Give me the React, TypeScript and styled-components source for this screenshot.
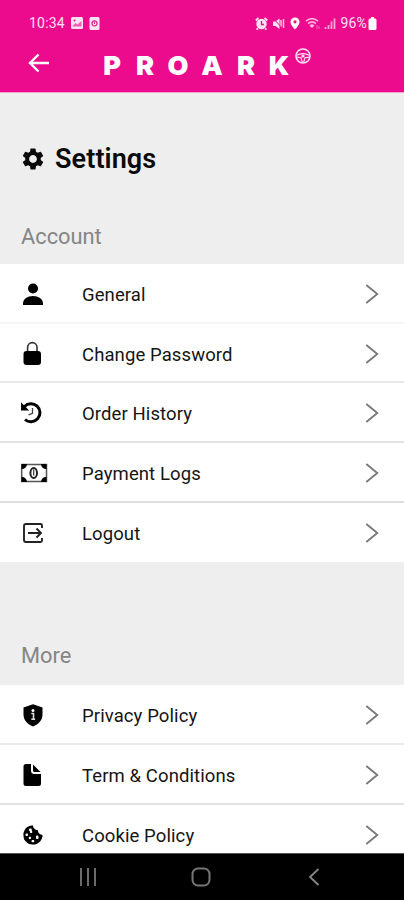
import React from "react";
import styled, { createGlobalStyle } from "styled-components";
import { FaCookieBite } from "react-icons/fa";
import { MdSettings } from "react-icons/md";

const GlobalStyle = createGlobalStyle`
  *, *::before, *::after { box-sizing: border-box; }
  body { margin: 0; background: #eeeeee; font-family: Roboto, "Liberation Sans", sans-serif; }
`;

const Screen = styled.div`
  width: 404px;
  height: 900px;
  display: flex;
  flex-direction: column;
  overflow: hidden;
  background: #eeeeee;
`;

const Header = styled.header`
  height: 93px;
  flex: none;
  background: #ec0b8d;
  border-bottom: 1px solid #f3a3d0;
  color: #ffe3f4;
`;

const StatusBar = styled.div`
  height: 46px;
  padding: 0 27px 0 29px;
  display: flex;
  align-items: center;
  justify-content: space-between;
  font-size: 14px;
`;

const StatusGroup = styled.div<{ $gap: number }>`
  display: flex;
  align-items: center;
  gap: ${(p) => p.$gap}px;
  svg { display: block; }
`;

const Clock = styled.span`
  width: 36px;
  letter-spacing: 0.2px;
  white-space: nowrap;
`;

const Battery = styled.span`
  display: flex;
  align-items: center;
  gap: 1px;
  letter-spacing: 0.2px;
`;

const TitleBar = styled.div`
  display: flex;
  height: 46px;
  padding-left: 28px;
`;

const BackButton = styled.button`
  width: 22px;
  height: 34px;
  padding: 0;
  border: 0;
  background: none;
  color: #fff;
  svg { display: block; }
`;

const Logo = styled.div`
  display: flex;
  margin-left: 45px;
  color: #fff;
  font-family: Inter, sans-serif;
  font-size: 26px;
  font-weight: 900;
  line-height: 40px;
`;

const Letter = styled.span<{ $w: number }>`
  width: ${(p) => p.$w}px;
  text-align: center;
  transform: scaleX(1.04);
`;

const Wheel = styled.svg`
  display: block;
  margin: 2px 0 0 0;
`;

const Content = styled.main`
  flex: 1;
  min-height: 0;
  overflow: hidden;
`;

const PageTitle = styled.h1`
  display: flex;
  align-items: center;
  gap: 9px;
  height: 131px;
  margin: 0;
  padding-left: 20px;
  font-size: 27px;
  font-weight: 600;
  letter-spacing: 0.1px;
  color: #0a0a0a;
`;

const Section = styled.section<{ $gap?: number }>`
  margin-top: ${(p) => p.$gap ?? 0}px;
`;

const SectionTitle = styled.h2<{ $h: number }>`
  margin: 0;
  height: ${(p) => p.$h}px;
  padding: 0 0 0 21px;
  font-size: 21.8px;
  line-height: 26px;
  font-weight: 400;
  color: #858585;
`;

const Row = styled.div<{ $h: number; $line: string }>`
  height: ${(p) => p.$h}px;
  display: flex;
  align-items: center;
  padding: 2px 25px 0 20px;
  background: #fff;
  border-bottom: 2px solid ${(p) => p.$line};
`;

const IconBox = styled.span`
  width: 62px;
  display: flex;
  svg { display: block; }
`;

const Label = styled.span`
  flex: 1;
  padding-top: 2px;
  font-size: 18.5px;
  letter-spacing: 0.1px;
  color: #151515;
`;

const NavBar = styled.nav`
  height: 47px;
  flex: none;
  display: flex;
  justify-content: space-between;
  align-items: center;
  padding: 0 84px 0 79px;
  background: #000;
  border-top: 1px solid #555;
`;

const HomeKey = styled.svg`
  margin-right: 3px;
`;

const PersonIcon = () => (
  <svg width="26" height="26" viewBox="0 0 26 26">
    <circle cx="13" cy="7.500" r="5" />
    <path d="M3 24v-1.500C3 18 7.500 15 13 15s10 3 10 7.500V24z" />
  </svg>
);
const LockIcon = () => (
  <svg width="26" height="26" viewBox="0 0 26 26">
    <path d="M7.600 11V6.300a4.700 4.700 0 0 1 9.400 0V11" fill="none" stroke="#333" strokeWidth="1.600" />
    <rect x="3.500" y="10" width="17.500" height="14" rx="3" />
  </svg>
);
const HistoryIcon = () => (
  <svg width="26" height="26" viewBox="0 0 26 26">
    <path d="M4.500 6.500A9 9 0 1 1 5 19.500" fill="none" stroke="#000" strokeWidth="3" />
    <path d="M1 2.200V10.500H9.200z" />
    <path d="M12.500 8v5.300l-4 1.500" fill="none" stroke="#444" strokeWidth="1.300" />
  </svg>
);
const MoneyIcon = () => (
  <svg width="28" height="26" viewBox="0 0 28 26">
    <rect x="1.700" y="4.500" width="24.800" height="17" fill="none" stroke="#555" strokeWidth="1.500" />
    <path d="M1.500 4h5.500a5 5 0 0 1-5.500 5zM26.500 4H21a5 5 0 0 0 5.500 5zM1.500 22h5.500a5 5 0 0 0-5.500-5zM26.500 22H21a5 5 0 0 1 5.500-5z" />
    <ellipse cx="13.700" cy="13" rx="3.300" ry="5" fill="none" stroke="#222" strokeWidth="2" />
    <path d="M13.700 9.500v6" stroke="#333" strokeWidth="1.200" />
  </svg>
);
const LogoutIcon = () => (
  <svg width="26" height="26" viewBox="0 0 26 26" fill="none" stroke="#222" strokeWidth="1.900">
    <path d="M22 8V5.500Q22 4 20.500 4H6Q4 4 4 6v14q0 2 2 2h14.500q1.500 0 1.500-1.500V18" />
    <path d="M8 13h12.500M16.500 8.500 21 13l-4.500 4.500" />
  </svg>
);
const ShieldIcon = () => (
  <svg width="26" height="26" viewBox="0 0 26 26">
    <path d="M13 2.200 22.500 5.500v7c0 5.800-4 9.800-9.500 12-5.500-2.200-9.500-6.200-9.500-12v-7z" />
    <circle cx="13" cy="8.500" r="1.500" fill="#fff" />
    <path d="M11.300 11.500h2.200v5.800M11.300 17.300h3.800" fill="none" stroke="#ddd" strokeWidth="1.600" />
  </svg>
);
const FileIcon = () => (
  <svg width="26" height="26" viewBox="0 0 26 26">
    <path d="M6 2h5v6.500q0 3.500 3.500 3.500H21v9.500q0 2.500-2.500 2.500H6q-2.500 0-2.500-2.500v-17Q3.500 2 6 2z" />
    <path d="M13 2.500 20.500 10h-6Q13 10 13 8.500z" />
  </svg>
);
const CookieIcon = () => (
  <svg width="26" height="26" viewBox="0 0 26 26">
    <FaCookieBite x="3.200" y="3.200" size={19.500} />
    <g fill="#fff">
      <rect x="9" y="6.500" width="2.800" height="2.800" rx="1" />
      <rect x="5.500" y="11.500" width="2.500" height="2.500" rx="1" />
      <rect x="16" y="14.500" width="2.500" height="2.500" rx="1" />
      <rect x="11.500" y="18" width="2.800" height="2.300" rx="1" />
    </g>
  </svg>
);

const Chevron = () => (
  <svg width="14" height="20" viewBox="0 0 14 20" fill="none" stroke="#777" strokeWidth="1.800">
    <path d="M1.300 1 12.300 10 1.300 19" />
  </svg>
);

interface Item {
  label: string;
  icon: React.ReactNode;
  height: number;
  line: string;
}

const accountItems: Item[] = [
  { label: "General", icon: <PersonIcon />, height: 60, line: "#f4f4f4" },
  { label: "Change Password", icon: <LockIcon />, height: 59, line: "#e8e8e8" },
  { label: "Order History", icon: <HistoryIcon />, height: 60, line: "#e2e2e2" },
  { label: "Payment Logs", icon: <MoneyIcon />, height: 60, line: "#dedede" },
  { label: "Logout", icon: <LogoutIcon />, height: 59, line: "#fff" },
];

const moreItems: Item[] = [
  { label: "Privacy Policy", icon: <ShieldIcon />, height: 60, line: "#ebebeb" },
  { label: "Term & Conditions", icon: <FileIcon />, height: 60, line: "#e2e2e2" },
  { label: "Cookie Policy", icon: <CookieIcon />, height: 60, line: "#e2e2e2" },
];

const MenuRows = ({ items }: { items: Item[] }) => (
  <>
    {items.map((item) => (
      <Row key={item.label} $h={item.height} $line={item.line}>
        <IconBox>{item.icon}</IconBox>
        <Label>{item.label}</Label>
        <Chevron />
      </Row>
    ))}
  </>
);

const logoLetters: [string, number][] = [
  ["P", 34], ["R", 32], ["O", 34], ["A", 34], ["R", 34], ["K", 32],
];

export default function App() {
  return (
    <Screen>
      <GlobalStyle />
      <Header>
        <StatusBar>
          <StatusGroup $gap={6}>
            <Clock>10:34</Clock>
            <svg width="12" height="12" viewBox="0 0 12 12">
              <rect width="12" height="12" rx="1.500" fill="#ffe3f4" />
              <path d="M1.500 9 4.500 6l2 1.500L10.500 4v5.500h-9z" fill="#f15bb2" />
              <circle cx="3.500" cy="3.500" r="1" fill="#ec0b8d" />
            </svg>
            <svg width="11" height="13" viewBox="0 0 11 13">
              <rect x="0.500" width="10" height="13" rx="1.500" fill="#ffe3f4" />
              <circle cx="5.500" cy="6.300" r="2.500" fill="none" stroke="#d42b91" strokeWidth="1.300" />
              <path d="M5.500 4.500v2.500" stroke="#d42b91" />
            </svg>
          </StatusGroup>
          <StatusGroup $gap={4}>
            <svg width="13" height="13" viewBox="0 0 13 13">
              <circle cx="6.500" cy="7" r="5.200" fill="#ffe3f4" />
              <path d="M.8 3.500 3.500 1M12.200 3.500 9.500 1M3 11.500l-1.500 1M10 11.500l1.500 1" stroke="#ffe3f4" strokeWidth="1.800" />
              <path d="M6.500 4v3.500H9" fill="none" stroke="#ec0b8d" strokeWidth="1.300" />
            </svg>
            <svg width="13" height="13" viewBox="0 0 13 13">
              <path d="M1 4.500h2.500L7.500 1.500v10.500L3.500 9H1z" fill="#ffe3f4" />
              <path d="M9 3v7M11.500 2v9" stroke="#ffc3e6" strokeWidth="1.500" />
              <path d="M1 1l10 11" stroke="#ec0b8d" strokeWidth="1" />
            </svg>
            <svg width="12" height="13" viewBox="0 0 12 13">
              <path d="M6 .5a4.500 4.500 0 0 1 4.500 4.500C10.500 8 6 12.500 6 12.500S1.500 8 1.500 5A4.500 4.500 0 0 1 6 .5z" fill="#fff" />
              <circle cx="6" cy="4.800" r="1.600" fill="#ec0b8d" />
            </svg>
            <svg width="15" height="13" viewBox="0 0 15 13">
              <path d="M1 4.200q6-5 12 0M3 6.700q4-3.500 8 0M5 9q2-1.700 4 0" fill="none" stroke="#ffb0dc" strokeWidth="1.600" />
              <path d="M5 8.500h4l-2 2.500z" fill="#ffc9e8" />
              <path d="M12 8v4M14 9v3" stroke="#f77fc5" strokeWidth=".8" />
            </svg>
            <svg width="12" height="13" viewBox="0 0 12 13">
              <path d="M1.500 12v-2M4.500 12V8M7.500 12V4.500M10.500 12V1.500" stroke="#ffa5d8" strokeWidth="1.800" />
            </svg>
            <Battery>
              <span>96%</span>
              <svg width="9" height="13" viewBox="0 0 9 13">
                <path d="M3 0h3v1.500h1q1.500 0 1.500 1.500v8.500q0 1.500-1.500 1.500H2Q.5 13 .5 11.500V3Q.5 1.500 2 1.500h1z" fill="#fff" />
              </svg>
            </Battery>
          </StatusGroup>
        </StatusBar>
        <TitleBar>
          <BackButton aria-label="Back">
            <svg width="22" height="34" viewBox="0 0 22 34" fill="none" stroke="#fff" strokeWidth="2.400">
              <path d="M10.500 8.500 2 17l8.500 8.500M2 17h19" />
            </svg>
          </BackButton>
          <Logo>
            {logoLetters.map(([letter, width], i) => (
              <Letter key={i} $w={width}>{letter}</Letter>
            ))}
          </Logo>
          <Wheel width="16" height="16" viewBox="0 0 16 16" fill="none" stroke="#ffe3f4">
            <circle cx="8" cy="8" r="7" strokeWidth="1.600" />
            <path d="M1.500 7.200Q8 4 14.500 7.200M2 9.200l4 .5 1.300 4.500M14 9.200l-4 .5-1.300 4.500" strokeWidth="1.200" />
            <circle cx="8" cy="8" r="1.600" fill="#ffe3f4" stroke="none" />
          </Wheel>
        </TitleBar>
      </Header>
      <Content>
        <PageTitle>
          <MdSettings size={26} />
          Settings
        </PageTitle>
        <Section>
          <SectionTitle $h={40}>Account</SectionTitle>
          <MenuRows items={accountItems} />
        </Section>
        <Section $gap={81}>
          <SectionTitle $h={42}>More</SectionTitle>
          <MenuRows items={moreItems} />
        </Section>
      </Content>
      <NavBar>
        <svg width="18" height="18" viewBox="0 0 18 18" stroke="#777" strokeWidth="1.800">
          <path d="M2 0v18M9 0v18M16 0v18" />
        </svg>
        <HomeKey width="20" height="20" viewBox="0 0 20 20" fill="none" stroke="#777" strokeWidth="2">
          <rect x="1.500" y="1.500" width="17" height="17" rx="5.500" />
        </HomeKey>
        <svg width="12" height="18" viewBox="0 0 12 18" fill="none" stroke="#888" strokeWidth="1.800">
          <path d="M10.500 1 2 9l8.500 8" />
        </svg>
      </NavBar>
    </Screen>
  );
}
